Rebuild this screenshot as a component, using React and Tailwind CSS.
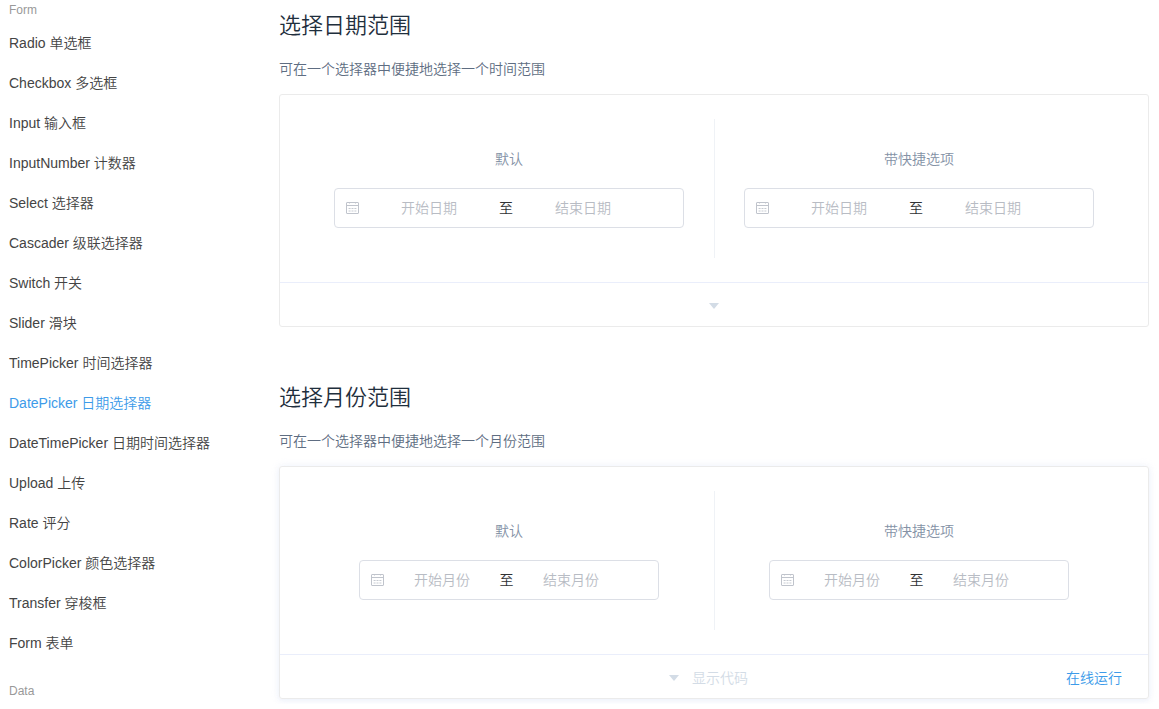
import clsx from 'clsx';

const navGroups = [
  {
    title: 'Form',
    items: [
      'Radio 单选框',
      'Checkbox 多选框',
      'Input 输入框',
      'InputNumber 计数器',
      'Select 选择器',
      'Cascader 级联选择器',
      'Switch 开关',
      'Slider 滑块',
      'TimePicker 时间选择器',
      'DatePicker 日期选择器',
      'DateTimePicker 日期时间选择器',
      'Upload 上传',
      'Rate 评分',
      'ColorPicker 颜色选择器',
      'Transfer 穿梭框',
      'Form 表单',
    ],
  },
  { title: 'Data', items: [] },
];

const activeItem = 'DatePicker 日期选择器';

const CalendarIcon = () => (
  <svg className="w-3.5 h-3.5 shrink-0" viewBox="0 0 14 14" fill="none" stroke="#c0c4cc" aria-hidden="true">
    <rect x="1.5" y="1.5" width="12" height="11" rx="0.5" />
    <path d="M1.5 4.5h12M4.5 1v1.5M10.5 1v1.5" />
    <path d="M3.6 7.5h8M3.6 10h8" strokeWidth="0.9" strokeDasharray="2 0.9" />
  </svg>
);

const CaretDown = () => (
  <svg className="w-2.5 h-1.5 shrink-0" viewBox="0 0 10 6" fill="#d3dce6" aria-hidden="true">
    <path d="M0 0h10L5 6z" />
  </svg>
);

const Sidebar = () => (
  <nav className="w-[270px] shrink-0">
    {navGroups.map((group) => (
      <div key={group.title} className="mb-[18px] last:mb-0">
        <div className="mb-[3px] text-xs leading-5 text-[#999]">{group.title}</div>
        <ul>
          {group.items.map((item) => (
            <li key={item}>
              <a
                href="#"
                className={clsx(
                  'block h-10 text-sm leading-10 whitespace-nowrap',
                  item === activeItem ? 'text-[#3d9be9]' : 'text-[#444] hover:text-[#3d9be9]'
                )}
              >
                {item}
              </a>
            </li>
          ))}
        </ul>
      </div>
    ))}
  </nav>
);

const RangePicker = ({ start, end, month }) => {
  const inputClass = clsx(
    'h-full bg-transparent text-center text-sm text-[#606266] outline-none placeholder:text-[#b8bcc4]',
    month ? 'w-[108px]' : 'w-[128px]'
  );

  return (
    <div
      className={clsx(
        'mx-auto flex h-10 items-center rounded border border-[#dcdfe6] bg-white pl-[10px]',
        month ? 'w-[300px]' : 'w-[350px]'
      )}
    >
      <CalendarIcon />
      <input className={clsx(inputClass, month ? 'ml-1' : 'ml-[6px]')} placeholder={start} aria-label={start} />
      <span className={clsx('text-center text-sm text-[#303133]', month ? 'w-[21px]' : 'w-[26px]')}>至</span>
      <input className={inputClass} placeholder={end} aria-label={end} />
    </div>
  );
};

const DemoSection = ({ title, description, start, end, month, hovered }) => (
  <section className="mb-[55px] last:mb-0">
    <h3 className="text-[22px] leading-8 font-[350] text-[#1f2f3d]">{title}</h3>
    <p className="mt-[17px] mb-[15px] text-sm leading-5 text-[#5e6d82]">{description}</p>
    <div
      className={clsx(
        'rounded-[3px] border border-[#ebebeb]',
        hovered && 'shadow-[0_0_8px_0_rgba(232,237,250,0.6),0_2px_4px_0_rgba(232,237,250,0.5)]'
      )}
    >
      <div className="grid grid-cols-2 p-6">
        <div className="py-[30px]">
          <div className="mb-[18px] text-center text-sm leading-[21px] text-[#8492a6]">默认</div>
          <RangePicker start={start} end={end} month={month} />
        </div>
        <div className="py-[30px] shadow-[inset_1px_0_0_#eff2f6]">
          <div className="mb-[18px] text-center text-sm leading-[21px] text-[#8492a6]">带快捷选项</div>
          <RangePicker start={start} end={end} month={month} />
        </div>
      </div>
      <div className="relative border-t border-[#eaeefb]">
        <button
          type="button"
          className={clsx(
            'flex h-[43px] w-full items-center justify-center gap-[13px] pt-[2px] text-sm text-[#d3dce6]',
            hovered && 'pr-[11px]'
          )}
          aria-label="显示代码"
        >
          <CaretDown />
          {hovered && <span>显示代码</span>}
        </button>
        {hovered && (
          <a href="#" className="absolute top-0 right-[26px] text-sm leading-[46px] text-[#3d9be9]">
            在线运行
          </a>
        )}
      </div>
    </div>
  </section>
);

const App = () => (
  <div className="flex bg-white pr-[10px] pl-[9px] font-['Liberation_Sans','Noto_Sans_CJK_SC',sans-serif] font-[350]">
    <Sidebar />
    <main className="min-w-0 flex-1 pt-[10px]">
      <DemoSection
        title="选择日期范围"
        description="可在一个选择器中便捷地选择一个时间范围"
        start="开始日期"
        end="结束日期"
      />
      <DemoSection
        title="选择月份范围"
        description="可在一个选择器中便捷地选择一个月份范围"
        start="开始月份"
        end="结束月份"
        month
        hovered
      />
    </main>
  </div>
);

export default App;
